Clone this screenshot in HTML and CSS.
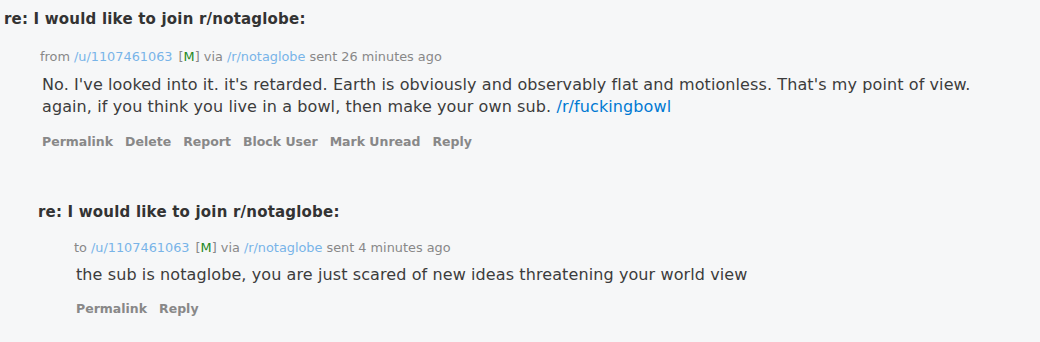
FILE: index.html
```html
<!DOCTYPE html>
<html lang="en">
<head>
  <meta charset="UTF-8">
  <title>Messages</title>
  <link rel="stylesheet" href="styles.css">
</head>
<body>
<div class="message">
  <div class="subject">re: I would like to join r/notaglobe:</div>
  <div class="entry">
    <div class="tagline">
      from <a href="#" class="author">/u/1107461063</a> <span class="mod">[<b>M</b>]</span> via <a href="#" class="author">/r/notaglobe</a> sent 26 minutes ago
    </div>
    <div class="md">
      No. I've looked into it. it's retarded. Earth is obviously and observably flat and motionless. That's my point of view.
      again, if you think you live in a bowl, then make your own sub. <a href="#">/r/fuckingbowl</a>
    </div>
    <ul class="buttons">
      <li><a href="#">Permalink</a></li>
      <li><a href="#">Delete</a></li>
      <li><a href="#">Report</a></li>
      <li><a href="#">Block User</a></li>
      <li><a href="#">Mark Unread</a></li>
      <li><a href="#">Reply</a></li>
    </ul>
  </div>

  <div class="message child">
    <div class="subject">re: I would like to join r/notaglobe:</div>
    <div class="entry">
      <div class="tagline">
        to <a href="#" class="author">/u/1107461063</a> <span class="mod">[<b>M</b>]</span> via <a href="#" class="author">/r/notaglobe</a> sent 4 minutes ago
      </div>
      <div class="md">
        the sub is notaglobe, you are just scared of new ideas threatening your world view
      </div>
      <ul class="buttons">
        <li><a href="#">Permalink</a></li>
        <li><a href="#">Reply</a></li>
      </ul>
    </div>
  </div>
</div>
</body>
</html>
```

FILE: styles.css
```css
html, body {
  margin: 0;
  padding: 0;
  background-color: #f6f7f8;
  font-family: "DejaVu Sans", Verdana, sans-serif;
  color: #3a3a3a;
}

a {
  text-decoration: none;
}

.message {
  padding: 10px 0 0 4px;
}

.subject {
  font-size: 15px;
  letter-spacing: 0.2px;
  font-weight: bold;
  color: #333;
  line-height: 18px;
}

.entry {
  padding: 21px 0 0 36px;
}

.tagline {
  font-size: 12.85px;
  color: #888;
  line-height: 16px;
}

.tagline .author {
  color: #78b4e8;
}

.mod {
  margin-left: 2px;
  color: #888;
}

.mod b {
  font-weight: normal;
  color: #228822;
}

.md {
  max-width: 940px;
  font-size: 16px;
  letter-spacing: 0.1px;
  line-height: 22px;
  color: #3c3c3c;
  padding: 9px 0 0 2px;
}

.md a {
  color: #0079d3;
}

.buttons {
  list-style: none;
  margin: 0;
  padding: 15px 0 0 2px;
  display: flex;
  gap: 12px;
  line-height: 16px;
}

.buttons a {
  font-size: 12.5px;
  font-weight: bold;
  color: #888;
}

/* the reply sits a little tighter than the first message */
.child {
  padding: 53px 0 0 34px;
}

.child .entry {
  padding-top: 19px;
}

.child .md {
  padding-top: 8px;
}

.child .buttons {
  padding-top: 14px;
}
```
